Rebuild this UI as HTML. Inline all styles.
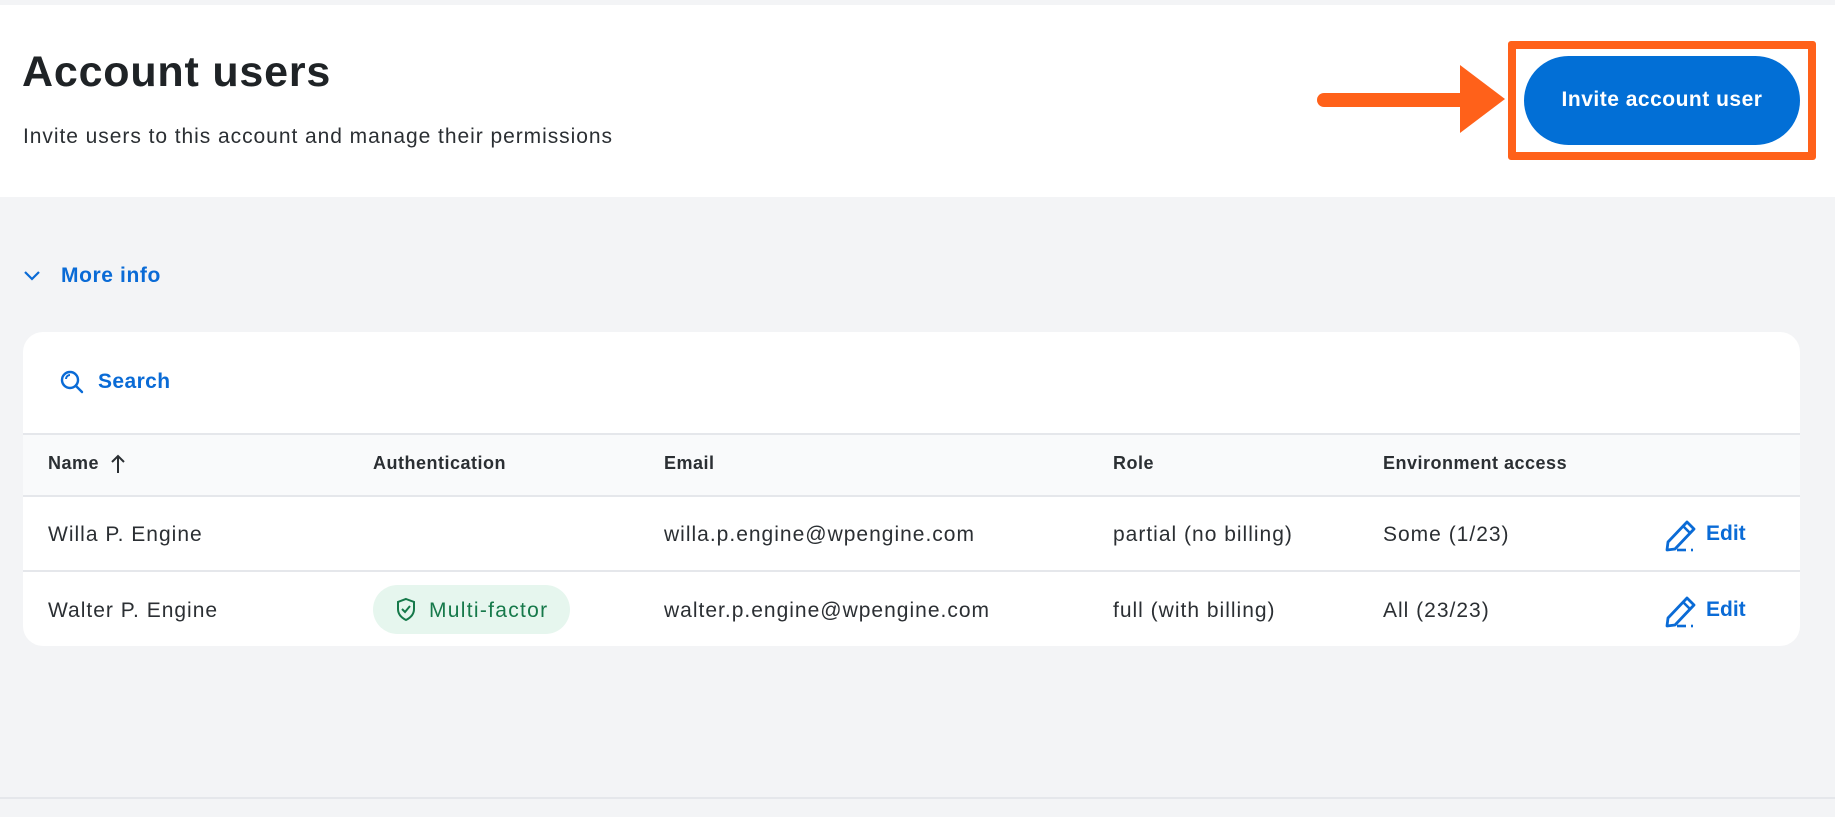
<!DOCTYPE html>
<html><head><meta charset="utf-8"><style>
*{margin:0;padding:0;box-sizing:border-box}
body{width:1835px;height:817px;background:#f3f4f6;font-family:"Liberation Sans",sans-serif;color:#2b2f33;position:relative;overflow:hidden}
.abs{position:absolute;white-space:nowrap}
#top{position:absolute;left:0;top:0;width:1835px;height:5px;background:#f3f4f6}
#hdr{position:absolute;left:0;top:5px;width:1835px;height:192px;background:#fff}
.card{position:absolute;left:23px;top:332px;width:1777px;height:314px;background:#fff;border-radius:20px;overflow:hidden}
.th{position:absolute;left:0;top:101px;width:1777px;height:64px;background:#f9fafb;border-top:2px solid #e5e7eb;border-bottom:2px solid #e5e7eb}
.hd{font-weight:bold;font-size:18px;color:#2b2f33;letter-spacing:0.5px}
.td{font-size:21px;color:#2b2f33;letter-spacing:1px}
.blue{color:#0a6bd6}
</style></head><body>
<div id="top"></div>
<div id="hdr"></div>
<div class="abs" style="left:22px;top:48px;font-size:43px;font-weight:bold;color:#1f2326;letter-spacing:0.8px">Account users</div>
<div class="abs" style="left:23px;top:125px;font-size:21px;color:#2b2f33;letter-spacing:0.95px">Invite users to this account and manage their permissions</div>

<svg class="abs" style="left:1310px;top:60px" width="200" height="80"><line x1="14" y1="40" x2="152" y2="40" stroke="#ff611a" stroke-width="14" stroke-linecap="round"/><polygon points="150,5 195,39 150,73" fill="#ff611a"/></svg>
<div class="abs" style="left:1508px;top:41px;width:308px;height:119px;border:8px solid #ff611a;border-radius:3px"></div>
<div class="abs" style="left:1524px;top:56px;width:276px;height:89px;border-radius:45px;background:#026fd6;color:#fff;font-weight:bold;font-size:21px;line-height:87px;text-align:center;letter-spacing:0.5px">Invite account user</div>

<svg class="abs" style="left:23px;top:268px" width="20" height="16"><polyline points="2,4 9,11 16,4" fill="none" stroke="#0a6bd6" stroke-width="2.2"/></svg>
<div class="abs blue" style="left:61px;top:264px;font-size:21px;font-weight:bold;letter-spacing:0.6px">More info</div>

<div class="card">
<svg class="abs" style="left:37px;top:38px" width="26" height="26"><circle cx="10" cy="10" r="8" fill="none" stroke="#0a6bd6" stroke-width="2.4"/><line x1="16" y1="16" x2="22" y2="22" stroke="#0a6bd6" stroke-width="2.4" stroke-linecap="round"/><path d="M6 9a4 4 0 0 1 4-4" fill="none" stroke="#0a6bd6" stroke-width="2"/></svg>
<div class="abs blue" style="left:75px;top:38px;font-size:21px;font-weight:bold;letter-spacing:0.4px">Search</div>
<div class="th"></div>
<div class="abs hd" style="left:25px;top:121px">Name</div>
<svg class="abs" style="left:87px;top:121px" width="16" height="22"><line x1="8" y1="3" x2="8" y2="20" stroke="#2b2f33" stroke-width="2"/><polyline points="2,9 8,3 14,9" fill="none" stroke="#2b2f33" stroke-width="2"/></svg>
<div class="abs hd" style="left:350px;top:121px">Authentication</div>
<div class="abs hd" style="left:641px;top:121px">Email</div>
<div class="abs hd" style="left:1090px;top:121px">Role</div>
<div class="abs hd" style="left:1360px;top:121px">Environment access</div>

<div class="abs td" style="left:25px;top:191px">Willa P. Engine</div>
<div class="abs td" style="left:641px;top:191px">willa.p.engine@wpengine.com</div>
<div class="abs td" style="left:1090px;top:191px">partial (no billing)</div>
<div class="abs td" style="left:1360px;top:191px">Some (1/23)</div>
<div class="abs" style="left:0;top:238px;width:1777px;height:2px;background:#e5e7eb"></div>

<div class="abs td" style="left:25px;top:267px">Walter P. Engine</div>
<div class="abs" style="left:350px;top:253px;width:197px;height:49px;border-radius:25px;background:#e6f6ee"></div>
<svg class="abs" style="left:372px;top:265px" width="22" height="26"><path d="M11 2 L19 5 V12 C19 18 15 21 11 23 C7 21 3 18 3 12 V5 Z" fill="none" stroke="#16794a" stroke-width="2"/><polyline points="7,12 10,15 15,9" fill="none" stroke="#16794a" stroke-width="2"/></svg>
<div class="abs td" style="left:406px;top:267px;color:#16794a;letter-spacing:1.3px">Multi-factor</div>
<div class="abs td" style="left:641px;top:267px">walter.p.engine@wpengine.com</div>
<div class="abs td" style="left:1090px;top:267px">full (with billing)</div>
<div class="abs td" style="left:1360px;top:267px">All (23/23)</div>

<svg class="abs" style="left:1640px;top:185px" width="36" height="36"><path d="M4 33 L5 25 L24 5 L31 12 L12 32 Z" fill="none" stroke="#0a6bd6" stroke-width="2.8" stroke-linejoin="round"/><line x1="20" y1="9" x2="27" y2="16" stroke="#0a6bd6" stroke-width="2.6"/><line x1="14" y1="33" x2="23" y2="33" stroke="#0a6bd6" stroke-width="2.6"/><line x1="28" y1="33" x2="30" y2="33" stroke="#0a6bd6" stroke-width="2.6"/></svg>
<div class="abs blue" style="left:1683px;top:190px;font-size:21px;font-weight:bold">Edit</div>
<svg class="abs" style="left:1640px;top:261px" width="36" height="36"><path d="M4 33 L5 25 L24 5 L31 12 L12 32 Z" fill="none" stroke="#0a6bd6" stroke-width="2.8" stroke-linejoin="round"/><line x1="20" y1="9" x2="27" y2="16" stroke="#0a6bd6" stroke-width="2.6"/><line x1="14" y1="33" x2="23" y2="33" stroke="#0a6bd6" stroke-width="2.6"/><line x1="28" y1="33" x2="30" y2="33" stroke="#0a6bd6" stroke-width="2.6"/></svg>
<div class="abs blue" style="left:1683px;top:266px;font-size:21px;font-weight:bold">Edit</div>
</div>
<div class="abs" style="left:0;top:797px;width:1835px;height:2px;background:#e5e7eb"></div>
</body></html>
